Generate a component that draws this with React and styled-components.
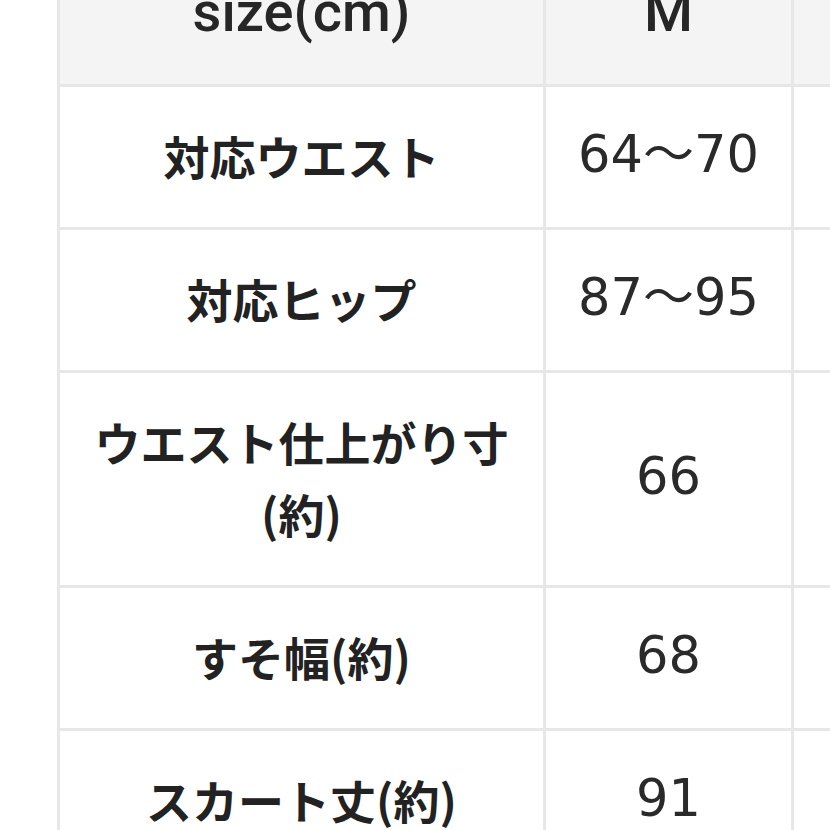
import React from 'react'
import styled, { createGlobalStyle } from 'styled-components';

const GlobalStyle = createGlobalStyle`
  html, body {
    margin: 0;
    padding: 0;
    background: #fff;
    overflow: hidden;
  }
  body {
    font-family: "Noto Sans CJK JP", sans-serif;
    color: #222;
  }
`;

const Page = styled.div`
  width: 830px;
  height: 830px;
  overflow: hidden;
  padding-left: 57px;
  box-sizing: border-box;
`;

const SizeTable = styled.div`
  display: grid;
  grid-template-columns: 486px 248px 248px;
  border-left: 3px solid #e7e7e7;
  margin-top: -56px;
  width: max-content;
`;

const Cell = styled.div`
  box-sizing: border-box;
  display: flex;
  align-items: center;
  justify-content: center;
  text-align: center;
  padding: 32px 30px 36px;
  border-right: 3px solid #e7e7e7;
  border-bottom: 3px solid #e7e7e7;
  background: ${p => (p.$head ? '#f4f4f4' : '#fff')};
  line-height: 72px;
`;

const HeadText = styled.span`
  font-family: Roboto, "Noto Sans CJK JP", sans-serif;
  font-weight: 500;
  font-size: 56px;
  color: #262626;
`;

const Label = styled.span`
  font-family: "Noto Sans CJK JP", sans-serif;
  font-weight: 700;
  font-size: 46px;
  color: #222;
`;

const Value = styled.span`
  font-family: "DejaVu Sans", "Noto Sans CJK JP", sans-serif;
  font-weight: 400;
  font-size: 51px;
  color: #2a2a2a;
`;

const rows = [
  { label: '対応ウエスト', value: '64〜70' },
  { label: '対応ヒップ', value: '87〜95' },
  { label: 'ウエスト仕上がり寸(約)', value: '66' },
  { label: 'すそ幅(約)', value: '68' },
  { label: 'スカート丈(約)', value: '91' },
];

const App = () => {
  return (
    <>
      <GlobalStyle />
      <Page>
        <SizeTable>
          <Cell $head><HeadText>size(cm)</HeadText></Cell>
          <Cell $head><HeadText>M</HeadText></Cell>
          <Cell $head><HeadText>L</HeadText></Cell>
          {rows.map(r => (
            <React.Fragment key={r.label}>
              <Cell><Label>{r.label}</Label></Cell>
              <Cell><Value>{r.value}</Value></Cell>
              <Cell />
            </React.Fragment>
          ))}
        </SizeTable>
      </Page>
    </>
  )
}

export default App
